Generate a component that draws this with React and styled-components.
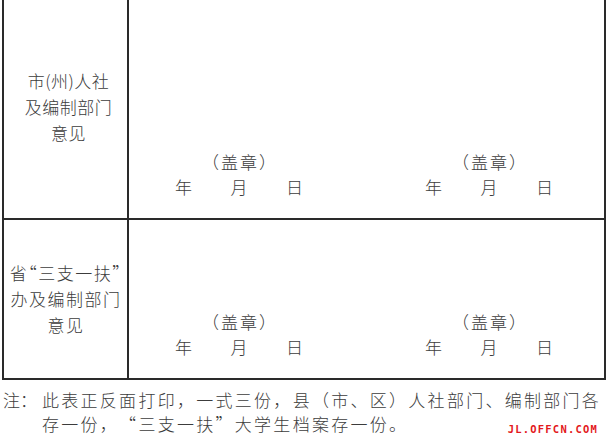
import styled, { createGlobalStyle } from "styled-components"

const GlobalStyle = createGlobalStyle`
    html, body {
        margin: 0;
        padding: 0;
        background: #fff;
        overflow: hidden;
    }
    body {
        width: 606px;
        height: 440px;
        font-family: "Noto Sans CJK SC", "Noto Sans", sans-serif;
        color: #3c3c3c;
    }
`

const Page = styled.div`
    width: 606px;
    height: 440px;
    overflow: hidden;
`

const Table = styled.div`
    margin: -6px 0 0 2px;
    width: 604px;
    box-sizing: border-box;
    border: 2px solid #2a2a2a;
    border-bottom: none;
`

const Row = styled.div`
    display: grid;
    grid-template-columns: 125px 1fr;
    height: ${props => props.height}px;
    border-bottom: 2px solid #2a2a2a;
`

const LabelCell = styled.div`
    display: flex;
    flex-direction: column;
    align-items: center;
    justify-content: center;
    border-right: 2px solid #2a2a2a;
    padding-left: ${props => props.indent}px;
    font-size: 17px;
    font-weight: 300;
    line-height: 26px;
    letter-spacing: ${props => props.spacing}px;
    white-space: nowrap;
    font-feature-settings: "halt";
`

const SignCell = styled.div`
    display: flex;
    align-items: flex-end;
    gap: 122px;
    padding: 0 0 19px 46px;
`

const SignGroup = styled.div`
    width: 128px;
    display: flex;
    flex-direction: column;
    align-items: center;
    font-size: 17px;
    font-weight: 300;
    line-height: 25px;
`

const Seal = styled.div`
    letter-spacing: 2px;
    margin-left: 2px;
`

const DateRow = styled.div`
    width: 128px;
    display: flex;
    justify-content: space-between;
`

const Note = styled.div`
    display: grid;
    grid-template-columns: 39px 1fr;
    margin: 8px 0 0 3px;
    font-size: 17px;
    font-weight: 300;
    line-height: 24px;
    white-space: nowrap;
    text-spacing-trim: space-all;
`

const NoteText = styled.div`
    letter-spacing: 2.28px;
`

const NoteLine = styled.div`
    display: flex;
    align-items: flex-end;
`

const Watermark = styled.span`
    margin-left: auto;
    margin-right: 8px;
    margin-bottom: 2px;
    font-family: "DejaVu Sans Mono", monospace;
    font-weight: bold;
    font-size: 10.5px;
    line-height: 10px;
    letter-spacing: 1.2px;
    color: #e3191c;
`

const Sign = () => (
    <SignGroup>
        <Seal>（盖章）</Seal>
        <DateRow>
            <span>年</span>
            <span>月</span>
            <span>日</span>
        </DateRow>
    </SignGroup>
)

const OpinionRow = ({ height, lines, spacing, indent }) => (
    <Row height={height}>
        <LabelCell spacing={spacing} indent={indent}>
            {lines.map(l => <div key={l}>{l}</div>)}
        </LabelCell>
        <SignCell>
            <Sign />
            <Sign />
        </SignCell>
    </Row>
)

export default function App() {
    return (
        <Page>
            <GlobalStyle />
            <Table>
                <OpinionRow height={222} lines={["市(州)人社", "及编制部门", "意见"]} spacing={0.5} indent={6} />
                <OpinionRow height={158} lines={["省“三支一扶”", "办及编制部门", "意见"]} spacing={1.5} indent={1} />
            </Table>
            <Note>
                <span>注：</span>
                <NoteText>
                    <div>此表正反面打印，一式三份，县（市、区）人社部门、编制部门各</div>
                    <NoteLine>
                        <span>存一份，“三支一扶”大学生档案存一份。</span>
                        <Watermark>JL.OFFCN.COM</Watermark>
                    </NoteLine>
                </NoteText>
            </Note>
        </Page>
    )
}
